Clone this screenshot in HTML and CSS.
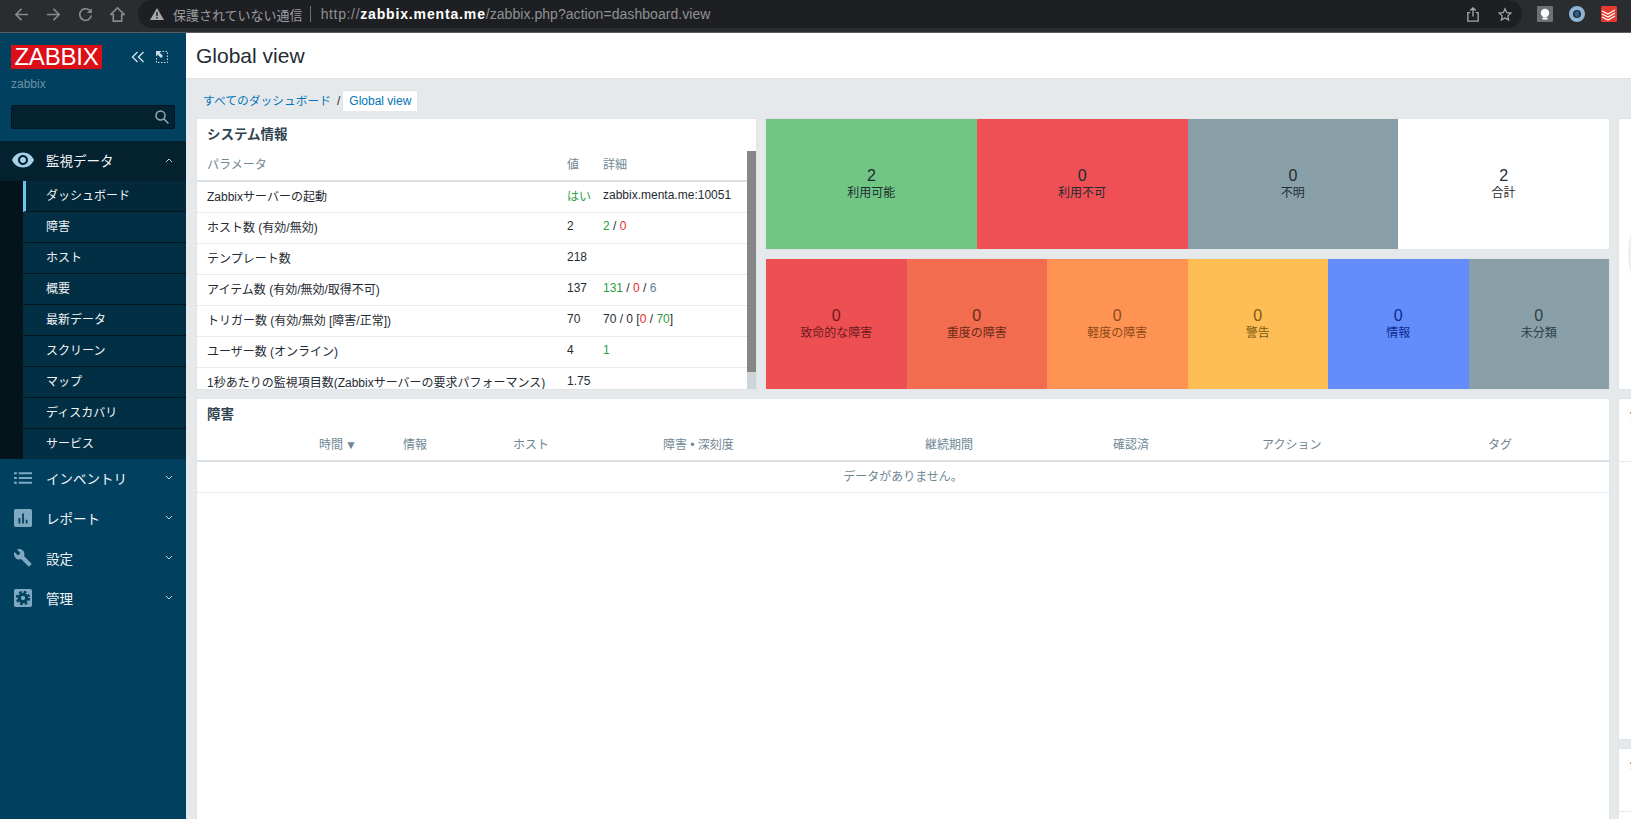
FILE: index.html
```html
<!DOCTYPE html>
<html lang="ja">
<head>
<meta charset="utf-8">
<title>Global view</title>
<link rel="stylesheet" href="styles.css">
</head>
<body>
<div class="browser">
  <div class="tool"><svg viewBox="0 0 16 16" class="ico-b"><path d="M15 8H2M8 2 2 8l6 6"/></svg></div>
  <div class="tool"><svg viewBox="0 0 16 16" class="ico-b"><path d="M1 8h13M8 2l6 6-6 6"/></svg></div>
  <div class="tool"><svg viewBox="0 0 16 16" class="ico-b"><path d="M13.5 5A6.2 6.2 0 1 0 14.2 9"/><path class="solid" d="M14.8 1.2v5.3H9.5z"/></svg></div>
  <div class="tool"><svg viewBox="0 0 16 16" class="ico-b"><path d="M8 1 .8 8H3.5v7h9V8h2.700z"/></svg></div>
  <div class="pill">
    <svg viewBox="0 0 14 12" class="warn"><path d="M7 0 14 12H0z"/><path class="warn-mark" d="M6.300 4h1.400v4H6.300zM6.300 9h1.400v1.400H6.300z"/></svg>
    <span class="secure">保護されていない通信</span>
    <span class="divider"></span>
    <span class="url"><span class="scheme">http://</span><b>zabbix.menta.me</b>/zabbix.php?action=dashboard.view</span>
    <span class="pill-icons">
      <svg viewBox="0 0 14 16" class="ico-p"><path d="M4 6H1.500v9h11V6H10M7 10V1M4 3.800 7 1l3 2.800"/></svg>
      <svg viewBox="0 0 16 16" class="ico-p"><path d="m8 1.500 2 4.400 4.800.5-3.600 3.200 1 4.700L8 11.900l-4.200 2.400 1-4.700L1.200 6.400 6 5.900z"/></svg>
    </span>
  </div>
  <div class="tool"><svg viewBox="0 0 16 16" class="ext"><rect width="16" height="16" rx="1" fill="#6d7074"/><circle cx="8" cy="7" r="4.200" fill="#fff"/><rect x="5.500" y="11.500" width="5" height="2" fill="#fff"/></svg></div>
  <div class="tool"><svg viewBox="0 0 16 16" class="ext"><circle cx="8" cy="8" r="6" fill="none" stroke="#8fb4d6" stroke-width="4"/><ellipse cx="8" cy="8" rx="2.200" ry="3" fill="#2f5f8f"/></svg></div>
  <div class="tool"><svg viewBox="0 0 16 16" class="ext"><rect width="16" height="16" rx="1.500" fill="#e53a30"/><path d="m1 5 6 3 7-4M1 8l6 3 7-4M1 11l6 3 7-4" fill="none" stroke="#fff" stroke-width="1.300"/></svg></div>
</div>

<div class="app">
  <aside class="sidebar">
    <div class="brand">
      <div class="brand-row">
        <div class="logo">ZABBIX</div>
        <svg viewBox="0 0 14 12" class="collapse"><path d="M6.500 1 1.500 6l5 5M12.500 1l-5 5 5 5"/></svg>
        <svg viewBox="0 0 12 12" class="kiosk"><path class="dots" d="M6.500.5h5v11H.5V6.500"/><path class="kiosk-arrow" d="M0 0h5.500L3.800 1.700 7 5 5 7 1.700 3.800 0 5.500z"/></svg>
      </div>
      <div class="user">zabbix</div>
      <div class="search">
        <svg viewBox="0 0 14 14" class="search-ico"><circle cx="5.500" cy="5.500" r="4.500"/><path d="m9 9 4.500 4.500"/></svg>
      </div>
    </div>
    <nav>
      <div class="menu menu-open">
        <svg viewBox="0 0 24 24" class="menu-ico"><path d="M12 4.500C7 4.500 2.730 7.610 1 12c1.730 4.390 6 7.500 11 7.500s9.270-3.110 11-7.500c-1.730-4.390-6-7.500-11-7.500zM12 17c-2.760 0-5-2.240-5-5s2.240-5 5-5 5 2.240 5 5-2.240 5-5 5zm0-8c-1.660 0-3 1.340-3 3s1.340 3 3 3 3-1.340 3-3-1.340-3-3-3z"/></svg>
        <span class="menu-text">監視データ</span>
        <svg viewBox="0 0 8 5" class="chev"><path d="m1 4 3-3 3 3"/></svg>
      </div>
      <div class="submenu">
        <a class="sub sub-active">ダッシュボード</a>
        <a class="sub">障害</a>
        <a class="sub">ホスト</a>
        <a class="sub">概要</a>
        <a class="sub">最新データ</a>
        <a class="sub">スクリーン</a>
        <a class="sub">マップ</a>
        <a class="sub">ディスカバリ</a>
        <a class="sub sub-last">サービス</a>
      </div>
      <div class="menu">
        <svg viewBox="3 3 19 18" class="menu-ico menu-ico-sm"><path d="M3 6h3v2H3zM3 11h3v2H3zM3 16h3v2H3zM8 6h14v2H8zM8 11h14v2H8zM8 16h14v2H8z"/></svg>
        <span class="menu-text">インベントリ</span>
        <svg viewBox="0 0 8 5" class="chev"><path d="m1 1 3 3 3-3"/></svg>
      </div>
      <div class="menu">
        <svg viewBox="2 2 20 20" class="menu-ico menu-ico-sm"><path fill-rule="evenodd" d="M4 2h16a2 2 0 0 1 2 2v16a2 2 0 0 1-2 2H4a2 2 0 0 1-2-2V4a2 2 0 0 1 2-2zm3 10v6h2v-6zm4-5v11h2V7zm4 7v4h2v-4z"/></svg>
        <span class="menu-text">レポート</span>
        <svg viewBox="0 0 8 5" class="chev"><path d="m1 1 3 3 3-3"/></svg>
      </div>
      <div class="menu">
        <svg viewBox="1 1 22.500 22.500" class="menu-ico menu-ico-sm"><path d="M22.700 19l-9.100-9.100c.9-2.300.4-5-1.500-6.900-2-2-5-2.400-7.400-1.300L9 6 6 9 1.600 4.700C.4 7.100.9 10.100 2.900 12.100c1.900 1.900 4.600 2.400 6.900 1.500l9.100 9.100c.4.4 1 .4 1.400 0l2.300-2.300c.5-.4.5-1.100.1-1.400z"/></svg>
        <span class="menu-text">設定</span>
        <svg viewBox="0 0 8 5" class="chev"><path d="m1 1 3 3 3-3"/></svg>
      </div>
      <div class="menu">
        <svg viewBox="2 2 20 20" class="menu-ico menu-ico-sm"><rect x="2" y="2" width="20" height="20" rx="2"/><circle class="gear-body" cx="12" cy="12" r="5.800"/><circle class="gear-teeth" cx="12" cy="12" r="6.800"/><circle class="gear-hole" cx="12" cy="12" r="2.400"/></svg>
        <span class="menu-text">管理</span>
        <svg viewBox="0 0 8 5" class="chev"><path d="m1 1 3 3 3-3"/></svg>
      </div>
    </nav>
  </aside>

  <main class="main">
    <header class="head"><h1>Global view</h1></header>
    <div class="content">
      <div class="crumbs">
        <a class="crumb-link">すべてのダッシュボード</a>
        <span class="crumb-sep">/</span>
        <a class="crumb-tab">Global view</a>
      </div>
      <div class="grid">
        <section class="widget w-info">
          <h4>システム情報</h4>
          <div class="info-body">
            <div class="info-scroll">
              <table class="tbl tbl-info">
                <colgroup><col class="c-a"><col class="c-b"><col></colgroup>
                <thead><tr><th>パラメータ</th><th>値</th><th>詳細</th></tr></thead>
                <tbody>
                  <tr><td>Zabbixサーバーの起動</td><td class="g">はい</td><td>zabbix.menta.me:10051</td></tr>
                  <tr><td>ホスト数 (有効/無効)</td><td>2</td><td><span class="g">2</span> / <span class="r">0</span></td></tr>
                  <tr><td>テンプレート数</td><td>218</td><td></td></tr>
                  <tr><td>アイテム数 (有効/無効/取得不可)</td><td>137</td><td><span class="g">131</span> / <span class="r">0</span> / <span class="m">6</span></td></tr>
                  <tr><td>トリガー数 (有効/無効 [障害/正常])</td><td>70</td><td>70 / 0 [<span class="r">0</span> / <span class="g">70</span>]</td></tr>
                  <tr><td>ユーザー数 (オンライン)</td><td>4</td><td class="g">1</td></tr>
                  <tr><td>1秒あたりの監視項目数(Zabbixサーバーの要求パフォーマンス)</td><td>1.75</td><td></td></tr>
                </tbody>
              </table>
            </div>
            <div class="scrollbar"><div class="thumb"></div></div>
          </div>
        </section>

        <section class="widget w-stats">
          <div class="stats">
            <div class="stat s-green"><b>2</b><span>利用可能</span></div>
            <div class="stat s-red"><b>0</b><span>利用不可</span></div>
            <div class="stat s-grey"><b>0</b><span>不明</span></div>
            <div class="stat s-white"><b>2</b><span>合計</span></div>
          </div>
        </section>

        <section class="widget w-stats2">
          <div class="stats">
            <div class="stat s-disaster"><b>0</b><span>致命的な障害</span></div>
            <div class="stat s-high"><b>0</b><span>重度の障害</span></div>
            <div class="stat s-average"><b>0</b><span>軽度の障害</span></div>
            <div class="stat s-warning"><b>0</b><span>警告</span></div>
            <div class="stat s-info"><b>0</b><span>情報</span></div>
            <div class="stat s-unclass"><b>0</b><span>未分類</span></div>
          </div>
        </section>

        <section class="widget w-clock"><div class="clock"></div></section>

        <section class="widget w-problems">
          <h4>障害</h4>
          <table class="tbl tbl-problems">
            <colgroup><col class="p1"><col class="p2"><col class="p3"><col class="p4"><col class="p5"><col class="p6"><col class="p7"><col class="p8"><col></colgroup>
            <thead><tr><th></th><th>時間<span class="sort">▼</span></th><th>情報</th><th>ホスト</th><th>障害 • 深刻度</th><th>継続期間</th><th>確認済</th><th>アクション</th><th>タグ</th></tr></thead>
            <tbody><tr><td colspan="9" class="nodata">データがありません。</td></tr></tbody>
          </table>
        </section>

        <section class="widget w-side1"><h4 class="side-title">システム</h4></section>
        <section class="widget w-side2"><h4 class="side-title">システム</h4></section>
      </div>
    </div>
  </main>
</div>
</body>
</html>
```

FILE: styles.css
```css
* { box-sizing: border-box; }
html, body { margin: 0; height: 100%; }
body {
  width: 1631px;
  height: 819px;
  overflow: hidden;
  display: flex;
  flex-direction: column;
  font-family: "Liberation Sans", "Noto Sans CJK JP", sans-serif;
  font-size: 12px;
  color: #1f2c33;
  background: #e6e9ec;
}

/* browser chrome */
.browser {
  height: 33px;
  flex: none;
  display: flex;
  align-items: flex-start;
  padding: 0 6px 0 5px;
  background: #2b2c2f;
  border-bottom: 1px solid #5c5e61;
}
.tool {
  width: 32px;
  height: 28px;
  flex: none;
  display: flex;
  align-items: center;
  justify-content: center;
}
.ico-b { width: 15px; height: 15px; fill: none; stroke: #85888c; stroke-width: 1.800; }
.ico-b .solid { fill: #85888c; stroke: none; }
.ext { width: 16px; height: 16px; }
.pill {
  flex: 1;
  height: 28px;
  margin: 0 7px 0 5px;
  padding-left: 12px;
  display: flex;
  align-items: center;
  background: #1e1f22;
  border-radius: 14px;
  white-space: nowrap;
}
.warn { width: 14px; height: 12px; flex: none; fill: #a4a7ab; }
.warn .warn-mark { fill: #1e1f22; }
.secure { margin-left: 9px; font-size: 13px; color: #9a9da1; }
.divider { width: 1px; height: 16px; margin: 0 10px 0 7px; background: #6c6f72; }
.url { font-size: 14px; color: #8f9296; letter-spacing: 0.050px; }
.scheme { letter-spacing: 0.650px; }
.url b { font-weight: 700; color: #fff; letter-spacing: 0.850px; }
.pill-icons { margin-left: auto; padding-right: 10px; display: flex; align-items: center; gap: 18px; }
.ico-p { width: 14px; height: 15px; fill: none; stroke: #a4a7ab; stroke-width: 1.400; }

/* app shell */
.app { flex: 1; min-height: 0; display: flex; }
.sidebar { width: 186px; flex: none; background: #01405f; color: #f0f4f6; }
.brand { padding: 12px 11px; }
.brand-row { display: flex; align-items: center; height: 24px; }
.logo {
  width: 91px;
  height: 24px;
  background: #dc0e17;
  color: #fff;
  font-size: 24px;
  line-height: 24px;
  text-align: center;
  letter-spacing: -0.200px;
}
.collapse { width: 14px; height: 12px; margin-left: 29px; fill: none; stroke: #c8dbe6; stroke-width: 1.500; }
.kiosk { width: 12px; height: 12px; margin-left: 11px; fill: none; }
.kiosk .dots { stroke: #c8dbe6; stroke-width: 1; stroke-dasharray: 1.500 1.500; }
.kiosk .kiosk-arrow { fill: #c8dbe6; }
.user { margin-top: 8px; line-height: 15px; color: #6c93a8; font-size: 12px; }
.search {
  margin-top: 13px;
  height: 24px;
  display: flex;
  align-items: center;
  justify-content: flex-end;
  padding-right: 5px;
  background: #04222f;
  border: 1px solid #021722;
  border-radius: 2px;
}
.search-ico { width: 14px; height: 14px; fill: none; stroke: #8ea9b8; stroke-width: 1.500; }

.menu {
  height: 40px;
  display: flex;
  align-items: center;
  padding: 0 13px 3px 11px;
  font-size: 13.500px;
}
.menu-open { background: #04212f; padding-bottom: 2px; }
.menu-ico { width: 24px; height: 24px; flex: none; fill: #7ea9c1; }
.menu-ico-sm { width: 18px; height: 18px; margin: 0 3px; }
.menu-open .menu-ico { fill: #a5d2e8; }
.gear-body { fill: #01405f; }
.gear-teeth { fill: none; stroke: #01405f; stroke-width: 2.400; stroke-dasharray: 3 2.340; }
.gear-hole { fill: #7ea9c1; }
.menu-text { margin-left: 11px; flex: 1; }
.chev { width: 8px; height: 5px; fill: none; stroke: #c0d0d9; stroke-width: 1; }

.submenu { padding-left: 23px; background: #04141b; }
.sub {
  display: flex;
  align-items: center;
  height: 31px;
  padding: 0 0 3px 23px;
  background: #032f45;
  border-bottom: 1px solid #04141c;
}
.sub-active { background: #02283a; border-left: 3px solid #6fc3f3; padding-left: 20px; }
.sub-last { height: 30px; border-bottom: 0; }

/* main */
.main { flex: 1; min-width: 0; overflow: hidden; display: flex; flex-direction: column; }
.head {
  height: 46px;
  flex: none;
  padding-left: 10px;
  display: flex;
  align-items: center;
  background: #fff;
  border-bottom: 1px solid #dfe4e7;
}
h1 { margin: 0; font-size: 21px; font-weight: 400; color: #1f2c33; }
.content { flex: 1; min-height: 0; padding: 11px 0 0 10px; }
.crumbs { display: flex; align-items: center; height: 21px; margin-bottom: 7px; }
.crumb-link { margin: 0 0 2px 7px; color: #0275b8; font-size: 11.750px; }
.crumb-sep { margin: 0 2px 0 6px; color: #1f2c33; }
.crumb-tab {
  height: 21px;
  padding: 0 6px;
  display: flex;
  align-items: center;
  background: #fff;
  border: 1px solid #dfe4e7;
  border-bottom: 0;
  color: #0275b8;
}

.grid {
  display: grid;
  grid-template-columns: 561px 845px 200px;
  grid-template-rows: 132px 132px 342px 342px;
  column-gap: 8px;
  row-gap: 8px;
}
.widget { background: #fff; border: 1px solid #dfe4e7; overflow: hidden; min-width: 0; }
.widget h4 { margin: 0; height: 31px; padding: 0 10px; font-size: 13.500px; line-height: 32px; font-weight: 700; color: #2f4450; }
.w-info { grid-column: 1; grid-row: 1 / 3; display: flex; flex-direction: column; }
.w-stats { grid-column: 2; grid-row: 1; }
.w-stats2 { grid-column: 2; grid-row: 2; }
.w-clock { grid-column: 3; grid-row: 1 / 3; display: flex; align-items: center; padding-left: 9px; }
.w-problems { grid-column: 1 / 3; grid-row: 3 / 5; }
.w-side1 { grid-column: 3; grid-row: 3; }
.w-side2 { grid-column: 3; grid-row: 4; }
.clock { width: 164px; height: 164px; flex: none; border: 3px solid #eceef0; border-radius: 50%; }
.widget .side-title {
  white-space: nowrap;
  height: 63px;
  border-bottom: 1px solid #e6e9ec;
}

.info-body { flex: 1; min-height: 0; display: flex; }
.info-scroll { flex: 1; min-width: 0; overflow: hidden; }
.scrollbar { width: 9px; flex: none; margin-top: 1px; background: #ccd5da; }
.thumb { height: 221px; background: #878787; }

.tbl { width: 100%; table-layout: fixed; border-collapse: separate; border-spacing: 0; }
.tbl th {
  height: 32px;
  padding: 0 0 4px 10px;
  text-align: left;
  font-weight: 400;
  color: #6f8794;
  border-bottom: 2px solid #dbe1e5;
  white-space: nowrap;
}
.tbl td {
  height: 31px;
  padding: 0 0 4px 10px;
  border-bottom: 1px solid #e8ebed;
  white-space: nowrap;
}
.c-a { width: 360px; }
.c-b { width: 36px; }
.g { color: #2f9e44; }
.r { color: #ea2a2a; }
.m { color: #5d7f91; }

.tbl-problems th { padding-left: 0; }
.p1 { width: 122px; }
.p2 { width: 84px; }
.p3 { width: 110px; }
.p4 { width: 150px; }
.p5 { width: 262px; }
.p6 { width: 188px; }
.p7 { width: 149px; }
.p8 { width: 226px; }
.sort { margin-left: 2px; font-size: 12px; color: #6f8794; }
.tbl td.nodata { text-align: center; color: #6f8794; padding-left: 0; }

/* status cells */
.stats { display: flex; height: 100%; }
.stat {
  flex: 1 1 0;
  min-width: 0;
  display: flex;
  flex-direction: column;
  align-items: center;
  justify-content: center;
  text-align: center;
  padding-bottom: 2px;
}
.stat b { font-size: 16px; line-height: 19px; font-weight: 400; }
.stat span { font-size: 12px; line-height: 16px; }
.s-green { background: #71c683; }
.s-red { background: #ee5055; }
.s-grey { background: #8aa0a8; }
.s-white { background: #fff; }
.s-disaster { background: #ee4f53; color: #6d1a1c; }
.s-high { background: #f26c50; color: #6a2a16; }
.s-average { background: #ff9353; color: #8d4a17; }
.s-warning { background: #ffbd55; color: #7d5a12; }
.s-info { background: #628dfa; color: #0d2a8e; }
.s-unclass { background: #8aa0a8; color: #2b3d45; }
```
